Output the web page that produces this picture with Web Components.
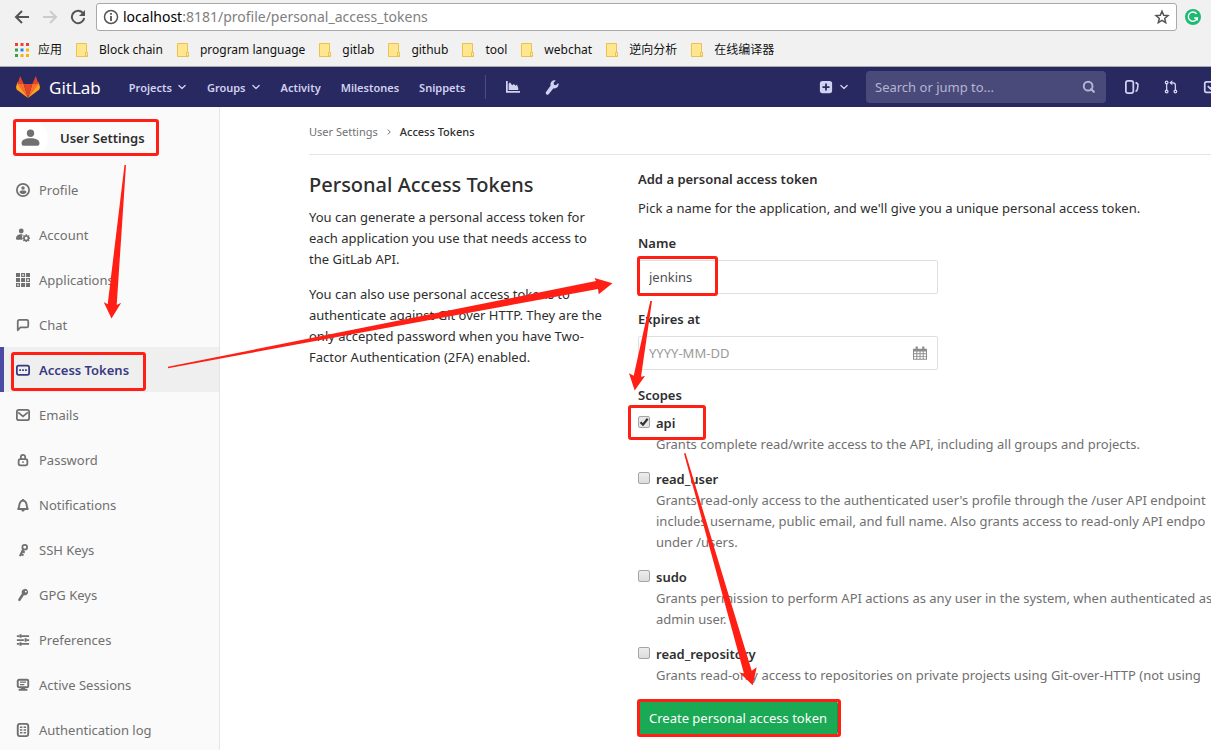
<!DOCTYPE html>
<html lang="en">
<head>
<meta charset="utf-8">
<title>Personal Access Tokens</title>
<style>
html,body{margin:0;padding:0}
body{font:13px/21px "Noto Sans","Noto Sans CJK SC",sans-serif;color:#2e2e2e;background:#fff;overflow:hidden}
</style>
</head>
<body>
<token-page></token-page>
<script>
const ICONS = {
  back:'<path d="M15 8H2M8 2L2 8l6 6" fill="none" stroke="currentColor" stroke-width="2"/>',
  forward:'<path d="M1 8h13M8 2l6 6-6 6" fill="none" stroke="currentColor" stroke-width="2"/>',
  reload:'<path d="M13.200 4.500A6.200 6.200 0 1 0 14.200 9" fill="none" stroke="currentColor" stroke-width="2"/><path d="M15 1v6H9z" fill="currentColor"/>',
  info:'<circle cx="8" cy="8" r="6.500" fill="none" stroke="currentColor" stroke-width="1.500"/><path d="M7.100 7h1.800v5H7.100zM7.100 4h1.800v1.800H7.100z" fill="currentColor"/>',
  star:'<path d="M8 2.200l1.700 4 4.300.4-3.300 2.800 1 4.200L8 11.400l-3.700 2.200 1-4.200L2 6.600l4.300-.4z" fill="none" stroke="currentColor" stroke-width="1.500"/>',
  grammar:'<circle cx="8" cy="8" r="8" fill="#1eb973"/><path d="M11.600 4.900A4.600 4.600 0 1 0 12.300 9H9.200M12.300 8.200v3.200" fill="none" stroke="#fff" stroke-width="1.400"/>',
  apps:'<g fill="#f13c31"><path d="M1 1h3v3H1zM6.500 1h3v3h-3zM12 1h3v3h-3z"/></g><path d="M1 6.500h3v3H1z" fill="#3ba24b"/><path d="M6.500 6.500h3v3h-3z" fill="#2a82f0"/><path d="M12 6.500h3v3h-3zM6.500 12h3v3h-3zM12 12h3v3h-3z" fill="#f5b30b"/><path d="M1 12h3v3H1z" fill="#3ba24b"/>',
  folder:'<path d="M1.500 1.500h10v9.500h1v3.500h-11z" fill="#ffe68f" stroke="#e9c34a"/><path d="M10.500 14v-3.500h2V14z" fill="#fff0b8" stroke="#e9c34a"/>',
  chevron:'<path d="M3 5.500l5 5 5-5" fill="none" stroke="currentColor" stroke-width="2" stroke-linecap="round" stroke-linejoin="round"/>',
  right:'<path d="M5.500 3l5 5-5 5" fill="none" stroke="currentColor" stroke-width="2"/>',
  chart:'<path d="M0 1h2v11.500h14v2H0z" fill="currentColor"/><path d="M3 11.500V4.500l1.500-2L7 6l2-1.500 2 2L12.500 5 14 9v2.500z" fill="currentColor"/>',
  wrench:'<path d="M14.200 3.900L12 6.200l-2-.4-.4-2L11.800 1.500A4 4 0 0 0 6.700 6.600L2.200 12.800a1.700 1.700 0 0 0 2.400 2.400L9.500 9.300A4 4 0 0 0 14.200 3.900z" fill="currentColor"/>',
  plus:'<path fill-rule="evenodd" d="M4 1h8a3 3 0 0 1 3 3v8a3 3 0 0 1-3 3H4a3 3 0 0 1-3-3V4a3 3 0 0 1 3-3zm3 3v3H4v2h3v3h2V9h3V7H9V4z" fill="currentColor"/>',
  search:'<circle cx="7" cy="7" r="5" fill="none" stroke="currentColor" stroke-width="2.200"/><path d="M10.500 10.500l3 3" stroke="currentColor" stroke-width="2.600" stroke-linecap="round"/>',
  issues:'<rect x="1" y="1" width="8.500" height="14" rx="2.500" fill="none" stroke="currentColor" stroke-width="2"/><path d="M12 3c2 .5 3 1.300 2.800 3l-.6 4.500c-.2 1.500-.8 2.200-2.200 2.500" fill="none" stroke="currentColor" stroke-width="1.800"/>',
  merge:'<g fill="none" stroke="currentColor" stroke-width="1.500"><circle cx="3" cy="2.800" r="1.500"/><circle cx="3" cy="13.200" r="1.500"/><circle cx="13" cy="13.200" r="1.500"/><path d="M3 4.500v7M13 11.500V6c0-2-.8-2.800-2.500-2.800H8"/></g><path d="M6 3.200L9.500.4V6z" fill="currentColor"/>',
  todo:'<path d="M14 8v4a2 2 0 0 1-2 2H4a2 2 0 0 1-2-2V4a2 2 0 0 1 2-2h8M5.500 7l3 3L15 3.500" fill="none" stroke="currentColor" stroke-width="2"/>',
  avatar:'<circle cx="8" cy="3.600" r="3.100" fill="currentColor"/><path d="M.5 12c0-3 3-4.200 7.500-4.200s7.500 1.200 7.500 4.200c0 1.800-.8 2.200-2 2.200h-11c-1.200 0-2-.4-2-2.200z" fill="currentColor"/>',
  profile:'<circle cx="8" cy="8" r="7" fill="none" stroke="currentColor" stroke-width="2"/><circle cx="8" cy="5.800" r="2" fill="currentColor"/><path d="M4 10.500c0-1.600 1.600-2 4-2s4 .4 4 2c-.8 1.500-2.200 2-4 2s-3.200-.5-4-2z" fill="currentColor"/>',
  account:'<circle cx="6" cy="3.500" r="2.800" fill="currentColor"/><path d="M0 12c0-3.200 2-5 5.500-5 1.200 0 1.900.2 2.500.6C6.500 9 6.400 11.500 7.500 13.500H1.500C.5 13.500 0 13 0 12z" fill="currentColor"/><circle cx="11.700" cy="11.700" r="2.500" fill="none" stroke="currentColor" stroke-width="1.800"/><path d="M11.700 7.200v2M11.700 14.200v2M7.200 11.700h2M14.200 11.700h2M8.500 8.500l1.400 1.400M13.500 13.500l1.400 1.400M14.900 8.500l-1.400 1.400M9.900 13.500l-1.400 1.400" stroke="currentColor" stroke-width="1.700"/>',
  applications:'<path fill-rule="evenodd" fill="currentColor" d="M0 0h4.600v4.600H0zM5.800 0h4.600v4.600H5.800zM7.200 1.400v1.800H9V1.400zM11.500 0H16v4.600h-4.500zM0 5.800h4.600v4.600H0zM5.800 5.800h4.600v4.600H5.800zM11.500 5.800H16v4.600h-4.500zM12.800 7.200V9h1.800V7.200zM0 11.500h4.600V16H0zM1.400 12.800v1.800h1.800v-1.800zM5.800 11.500h4.600V16H5.800zM11.500 11.500H16V16h-4.500z"/>',
  chat:'<path d="M2 14V4a1.800 1.800 0 0 1 1.800-1.800h8.400A1.800 1.800 0 0 1 14 4v5a1.800 1.800 0 0 1-1.800 1.800H5z" fill="none" stroke="currentColor" stroke-width="2" stroke-linejoin="round"/>',
  token:'<rect x="1" y="3" width="14" height="10.500" rx="2" fill="none" stroke="currentColor" stroke-width="2"/><path d="M3.700 7.200h2v2h-2zM7 7.200h2v2H7zM10.300 7.200h2v2h-2z" fill="currentColor"/>',
  email:'<rect x="1" y="2.200" width="14" height="11.600" rx="2.200" fill="none" stroke="currentColor" stroke-width="2"/><path d="M2.500 5L8 9.600 13.500 5" fill="none" stroke="currentColor" stroke-width="2"/>',
  lock:'<rect x="3" y="7" width="10" height="7" rx="2" fill="none" stroke="currentColor" stroke-width="2"/><path d="M5.500 7V4.500a2.500 2.500 0 0 1 5 0V7" fill="none" stroke="currentColor" stroke-width="2"/><path d="M7.200 9.500h1.600v2H7.200z" fill="currentColor"/>',
  bell:'<path d="M2.500 12.500c1.200-1.200 1-3.200 1.500-5.500C4.600 4.500 6 3 8 3s3.400 1.500 4 4c.5 2.300.3 4.300 1.500 5.500z" fill="none" stroke="currentColor" stroke-width="2.200" stroke-linejoin="round"/><path d="M6 13.300h4c0 1.300-.8 2-2 2s-2-.7-2-2zM7 1h2v2H7z" fill="currentColor"/>',
  key:'<circle cx="10" cy="4.800" r="2.700" fill="none" stroke="currentColor" stroke-width="2"/><path d="M8.500 6.500L4.500 15M7.500 9.800l2.500 1M5.800 12.700l2.800 1.200" fill="none" stroke="currentColor" stroke-width="2.400"/>',
  gpg:'<path fill-rule="evenodd" d="M10 1a3.700 3.700 0 1 1-1 7.200L4.500 15l-1.700-.3-.3-1.900 4.300-6.500A3.700 3.700 0 0 1 10 1zm1.200 2a1.100 1.100 0 1 0 0 2.200 1.100 1.100 0 0 0 0-2.200z" fill="currentColor"/>',
  sliders:'<path d="M1 3.500h3M6 3.500h9M1 8h8M12 8h3M1 12.500h3M6 12.500h9" stroke="currentColor" stroke-width="2"/><path d="M4 1.500h2.400v4H4zM9.800 6h2.400v4H9.800zM4 10.500h2.400v4H4z" fill="currentColor"/>',
  monitor:'<rect x="2" y="2" width="12" height="8.500" rx="1.500" fill="none" stroke="currentColor" stroke-width="2.200"/><path d="M4.500 4.700h7M4.500 7.500h5" stroke="currentColor" stroke-width="1.300"/><path d="M5.500 11h5v1.500h2.500v2H3v-2h2.500z" fill="currentColor"/>',
  log:'<rect x="2" y="1" width="12" height="14" rx="2.500" fill="none" stroke="currentColor" stroke-width="2.200"/><path d="M4.500 4h2.800v1.800H4.500zM8.700 4h2.800v1.800H8.700zM4.500 7.100h2.800v1.800H4.500zM8.700 7.100h2.800v1.800H8.700zM4.500 10.200h2.800V12H4.500zM8.700 10.200h2.800V12H8.700z" fill="currentColor"/>',
  calendar:'<path fill-rule="evenodd" fill="currentColor" d="M0 3h3V.5h2.500V3h5V.5H13V3h3v12.800H0zM1.200 6.200v2.200h2.600V6.200zM4.900 6.200v2.200h2.600V6.200zM8.600 6.200v2.200h2.500V6.200zM12.200 6.200v2.200h2.600V6.200zM1.200 9.400v2.200h2.600V9.400zM4.900 9.400v2.200h2.600V9.400zM8.600 9.400v2.200h2.500V9.400zM12.200 9.400v2.200h2.600V9.400zM1.200 12.600v2.100h2.600v-2.100zM4.900 12.600v2.100h2.600v-2.100zM8.600 12.600v2.100h2.500v-2.100zM12.200 12.600v2.100h2.600v-2.100z"/>'
};

function define(name, html){
  customElements.define(name, class extends HTMLElement{
    connectedCallback(){
      if(this.shadowRoot) return;
      const root = this.attachShadow({mode:'open'});
      const t = document.createElement('template');
      t.innerHTML = typeof html === 'function' ? html(this) : html;
      root.append(t.content.cloneNode(true));
    }
  });
}

define('ui-icon', el => `
<style>:host{display:inline-flex;flex:none;width:var(--size,14px);height:var(--size,14px)}svg{width:100%;height:100%;display:block}</style>
<svg viewBox="0 0 16 16" aria-hidden="true">${ICONS[el.getAttribute('name')]}</svg>`);

define('book-mark', el => `
<style>:host{display:flex}a{display:flex;align-items:center;gap:8px;color:#111;text-decoration:none;white-space:nowrap}ui-icon{--size:16px}</style>
<a href="#"><ui-icon name="${el.getAttribute('icon')||'folder'}"></ui-icon><slot></slot></a>`);

define('browser-bar', `
<style>
:host{display:block;background:#f1f1f1;border-bottom:1px solid #aaa}
.tools{display:flex;align-items:center;padding:3px 10px 0 14px;height:28px}
button{display:flex;padding:0;border:0;background:none;color:#555;margin-right:12px;--size:16px}
button[disabled]{color:#ccc}
.url{flex:1;display:flex;align-items:center;box-sizing:border-box;height:28px;border:1px solid #a9a9a9;border-radius:3px;background:#fff;padding:0 6px;margin:0 8px 0 -2px;--size:16px;color:#555}
.url span{flex:1;font-size:14px;line-height:20px;color:#808080;padding:0 0 1px 4px}.url b{font-weight:400;color:#000}
nav{display:flex;align-items:center;height:35px;box-sizing:border-box;padding:2px 14px 0;font-size:12px;gap:13px}
</style>
<div class="tools">
<button aria-label="Back"><ui-icon name="back"></ui-icon></button>
<button aria-label="Forward" disabled><ui-icon name="forward"></ui-icon></button>
<button aria-label="Reload"><ui-icon name="reload"></ui-icon></button>
<div class="url"><ui-icon name="info"></ui-icon><span><b>localhost</b>:8181/profile/personal_access_tokens</span><ui-icon name="star"></ui-icon></div>
<ui-icon name="grammar" style="--size:16px"></ui-icon>
</div>
<nav aria-label="Bookmarks">
<book-mark icon="apps">应用</book-mark><book-mark>Block chain</book-mark><book-mark>program language</book-mark><book-mark>gitlab</book-mark><book-mark>github</book-mark><book-mark>tool</book-mark><book-mark>webchat</book-mark><book-mark>逆向分析</book-mark><book-mark>在线编译器</book-mark>
</nav>`);

define('app-navbar', `
<style>
:host{display:flex;align-items:center;height:40px;background:#292961;color:#d1d1f0;padding-left:16px;font-size:11px;font-weight:600;overflow:hidden}
a{display:flex;align-items:center;flex:none;color:inherit;text-decoration:none}
.brand{gap:9px;color:#fff;font-size:17px;font-weight:400;margin-right:28px}
.brand svg{width:24px;height:24px}
.links{display:flex;align-items:center;gap:20px}
.menu{gap:5px;--size:10px}
.tools{display:flex;align-items:center;gap:24px;border-left:1px solid #4b4b80;height:24px;margin-left:20px;padding-left:20px}
.right{margin-left:auto;display:flex;align-items:center;flex:none}
.new{gap:6px;margin-right:17px}
label{display:flex;align-items:center;box-sizing:border-box;width:240px;height:32px;border-radius:4px;background:#4a4a7a;padding:0 10px 0 9px;color:#b5b5d3}
input{flex:1;min-width:0;border:0;outline:0;padding:0;background:none;font:13px "Noto Sans",sans-serif;color:inherit}
input::placeholder{color:#b5b5d3;opacity:1}
.status{display:flex;gap:25px;margin:0 -6px 0 19px}
</style>
<a class="brand" href="#"><svg viewBox="0 0 24 24" aria-hidden="true"><path d="M12 23L.6 14.500 0 12l1.600-5z" fill="#fca326"/><path d="M12 23l11.400-8.500.6-2.500-1.600-5z" fill="#fca326"/><path d="M12 23L1.500 9h6.200zM12 23L22.500 9h-6.200z" fill="#fc6d26"/><path d="M12 23L7.700 9h8.600zM1.500 9L4.200 1l3.500 8zM22.500 9l-2.700-8-3.500 8z" fill="#e24329"/></svg>GitLab</a>
<div class="links">
<a class="menu" href="#">Projects<ui-icon name="chevron"></ui-icon></a>
<a class="menu" href="#">Groups<ui-icon name="chevron"></ui-icon></a>
<a href="#">Activity</a><a href="#">Milestones</a><a href="#">Snippets</a>
</div>
<div class="tools"><a href="#" aria-label="Statistics"><ui-icon name="chart"></ui-icon></a><a href="#" aria-label="Admin area"><ui-icon name="wrench" style="--size:16px"></ui-icon></a></div>
<div class="right">
<a class="new" href="#" aria-label="New"><ui-icon name="plus"></ui-icon><ui-icon name="chevron" style="--size:10px"></ui-icon></a>
<label><input type="search" placeholder="Search or jump to..." aria-label="Search"><ui-icon name="search"></ui-icon></label>
<div class="status"><a href="#" aria-label="Issues"><ui-icon name="issues"></ui-icon></a><a href="#" aria-label="Merge requests"><ui-icon name="merge"></ui-icon></a><a href="#" aria-label="Todos"><ui-icon name="todo"></ui-icon></a></div>
</div>`);

define('side-link', el => `
<style>
:host{display:block}
a{display:flex;align-items:center;gap:9px;height:45px;box-sizing:border-box;padding:1px 0 0 16px;color:#707070;text-decoration:none}
:host([active]) a{background:#efefef;border-left:4px solid #4b4ba3;padding-left:12px;color:#393982;font-weight:600}
</style>
<a href="#"><ui-icon name="${el.getAttribute('icon')}"></ui-icon><slot></slot></a>`);

define('side-bar', `
<style>
:host{display:block;background:#fafafa;border-right:1px solid #e5e5e5;box-sizing:border-box}
.head{display:flex;align-items:center;gap:12px;height:60px;box-sizing:border-box;padding:2px 0 0 12px;color:#2e2e2e;font-weight:600;text-decoration:none}
.pic{display:grid;place-items:center;width:36px;height:36px;border-radius:50%;background:#fff;color:#707070;--size:19px}
</style>
<a class="head" href="#"><span class="pic"><ui-icon name="avatar"></ui-icon></span>User Settings</a>
<nav aria-label="Settings">
<side-link icon="profile">Profile</side-link>
<side-link icon="account">Account</side-link>
<side-link icon="applications">Applications</side-link>
<side-link icon="chat">Chat</side-link>
<side-link icon="token" active>Access Tokens</side-link>
<side-link icon="email">Emails</side-link>
<side-link icon="lock">Password</side-link>
<side-link icon="bell">Notifications</side-link>
<side-link icon="key">SSH Keys</side-link>
<side-link icon="gpg">GPG Keys</side-link>
<side-link icon="sliders">Preferences</side-link>
<side-link icon="monitor">Active Sessions</side-link>
<side-link icon="log">Authentication log</side-link>
</nav>`);

define('scope-option', el => `
<style>
:host{display:grid;grid-template-columns:12px 1fr;column-gap:6px;margin-bottom:14px;white-space:nowrap}
input{appearance:none;box-sizing:border-box;width:12px;height:12px;margin:3px 0 0;border:1px solid #a5a5a5;border-radius:2px;background:linear-gradient(#ededed,#dcdcdc) center/100%}
input:checked{background:url("data:image/svg+xml,%3Csvg xmlns='http://www.w3.org/2000/svg' viewBox='0 0 10 10'%3E%3Cpath d='M1.500 5.200L4 7.700 8.700 1.800' fill='none' stroke='%23333' stroke-width='2.200'/%3E%3C/svg%3E") #e6e6e6}
label{font-weight:600}
div{grid-column:2;color:#707070}
</style>
<input type="checkbox" id="scope" ${el.hasAttribute('checked')?'checked':''}><label for="scope">${el.getAttribute('name')}</label><div><slot></slot></div>`);

define('text-field', el => `
<style>
:host{display:block;margin-bottom:15px}
label{display:block;font-weight:600;margin-bottom:6px}
.box{display:flex;align-items:center;box-sizing:border-box;width:300px;height:34px;border:1px solid #dfdfdf;border-radius:2px;background:#fff;padding:0 10px;color:#8c8c8c}
input{flex:1;min-width:0;border:0;outline:0;padding:0;background:none;font:13px "Noto Sans",sans-serif;color:#4f4f4f}
input::placeholder{color:#9a9a9a;opacity:1}
</style>
<label for="field">${el.getAttribute('label')}</label>
<div class="box"><input id="field" type="text" value="${el.getAttribute('value')||''}" placeholder="${el.getAttribute('placeholder')||''}"><slot></slot></div>`);

define('token-form', `
<style>
:host{display:block;min-width:0}
h5{margin:0 0 8px;font-size:13px;line-height:21px;font-weight:600}
p{margin:0 0 14px;white-space:nowrap}
strong{display:block;font-weight:600;margin-bottom:7px}
button{display:block;height:34px;margin-top:15px;padding:0 10px;border:1px solid #168f48;border-radius:3px;background:#1aaa55;color:#fff;font:13px "Noto Sans",sans-serif}
</style>
<h5>Add a personal access token</h5>
<p>Pick a name for the application, and we'll give you a unique personal access token.</p>
<text-field label="Name" value="jenkins"></text-field>
<text-field label="Expires at" placeholder="YYYY-MM-DD"><ui-icon name="calendar"></ui-icon></text-field>
<strong>Scopes</strong>
<scope-option name="api" checked>Grants complete read/write access to the API, including all groups and projects.</scope-option>
<scope-option name="read_user">Grants read-only access to the authenticated user's profile through the /user API endpoint<br>includes username, public email, and full name. Also grants access to read-only API endpo<br>under /users.</scope-option>
<scope-option name="sudo">Grants permission to perform API actions as any user in the system, when authenticated as<br>admin user.</scope-option>
<scope-option name="read_repository">Grants read-only access to repositories on private projects using Git-over-HTTP (not using</scope-option>
<button type="button">Create personal access token</button>`);

define('settings-content', `
<style>
:host{display:block;min-width:0;padding-left:89px;overflow:hidden}
nav{display:flex;align-items:center;gap:7px;height:48px;box-sizing:border-box;padding-top:2px;border-bottom:1px solid #e5e5e5;font-size:11px;--size:8px;color:#707070}
a{color:#707070;text-decoration:none}a[aria-current]{color:#2e2e2e;font-weight:500}
.cols{display:grid;grid-template-columns:300px minmax(0,1fr);column-gap:29px;padding-top:14px}
h4{margin:4px 0 10px;font-size:20px;line-height:24px;font-weight:500}
p{margin:0 0 14px}
</style>
<nav aria-label="Breadcrumb"><a href="#">User Settings</a><ui-icon name="right"></ui-icon><a href="#" aria-current="page">Access Tokens</a></nav>
<div class="cols">
<section><h4>Personal Access Tokens</h4>
<p>You can generate a personal access token for each application you use that needs access to the GitLab API.</p>
<p>You can also use personal access tokens to authenticate against Git over HTTP. They are the only accepted password when you have Two-Factor Authentication (2FA) enabled.</p></section>
<token-form></token-form>
</div>`);

define('red-marks', `
<style>:host{position:absolute;left:0;top:0;pointer-events:none}svg{display:block}</style>
<svg width="1211" height="750" viewBox="0 0 1211 750" aria-hidden="true">
<g fill="none" stroke="#ff1f14" stroke-width="3">
<rect x="14.500" y="120.500" width="143" height="34" rx="1.500"/>
<rect x="12.500" y="353.500" width="132" height="36" rx="1.500"/>
<rect x="638.500" y="257.500" width="78" height="37" rx="1.500"/>
<rect x="629.500" y="406.500" width="75" height="32" rx="1.500"/>
<rect x="638.500" y="700.500" width="201" height="35" rx="1.500"/>
</g>
<g fill="#ff1f14">
<path d="M124.500 165h1.500L116.700 305l4.500-2.300L111.500 318.500 103.700 302l4 2.300z"/>
<path d="M168 366.800L596 281l-1.500-3 18 5.300L598.700 294.300 598 289 168 368.200z"/>
<path d="M650.300 301h1.700L641 376.700l4-.7L634.700 390.500 629 373.300l4.700 2.400z"/>
<path d="M684 453.500l1.500-.5L751.700 670.700l5-3.400-4 18L739 672.300l5 1.400z"/>
</g>
</svg>`);

define('token-page', `
<style>
:host{display:block;position:relative;min-height:100vh;overflow:hidden}
.body{display:grid;grid-template-columns:220px minmax(0,1fr)}
</style>
<browser-bar></browser-bar>
<app-navbar></app-navbar>
<div class="body"><side-bar></side-bar><settings-content></settings-content></div>
<red-marks></red-marks>`);
</script>
</body>
</html>
